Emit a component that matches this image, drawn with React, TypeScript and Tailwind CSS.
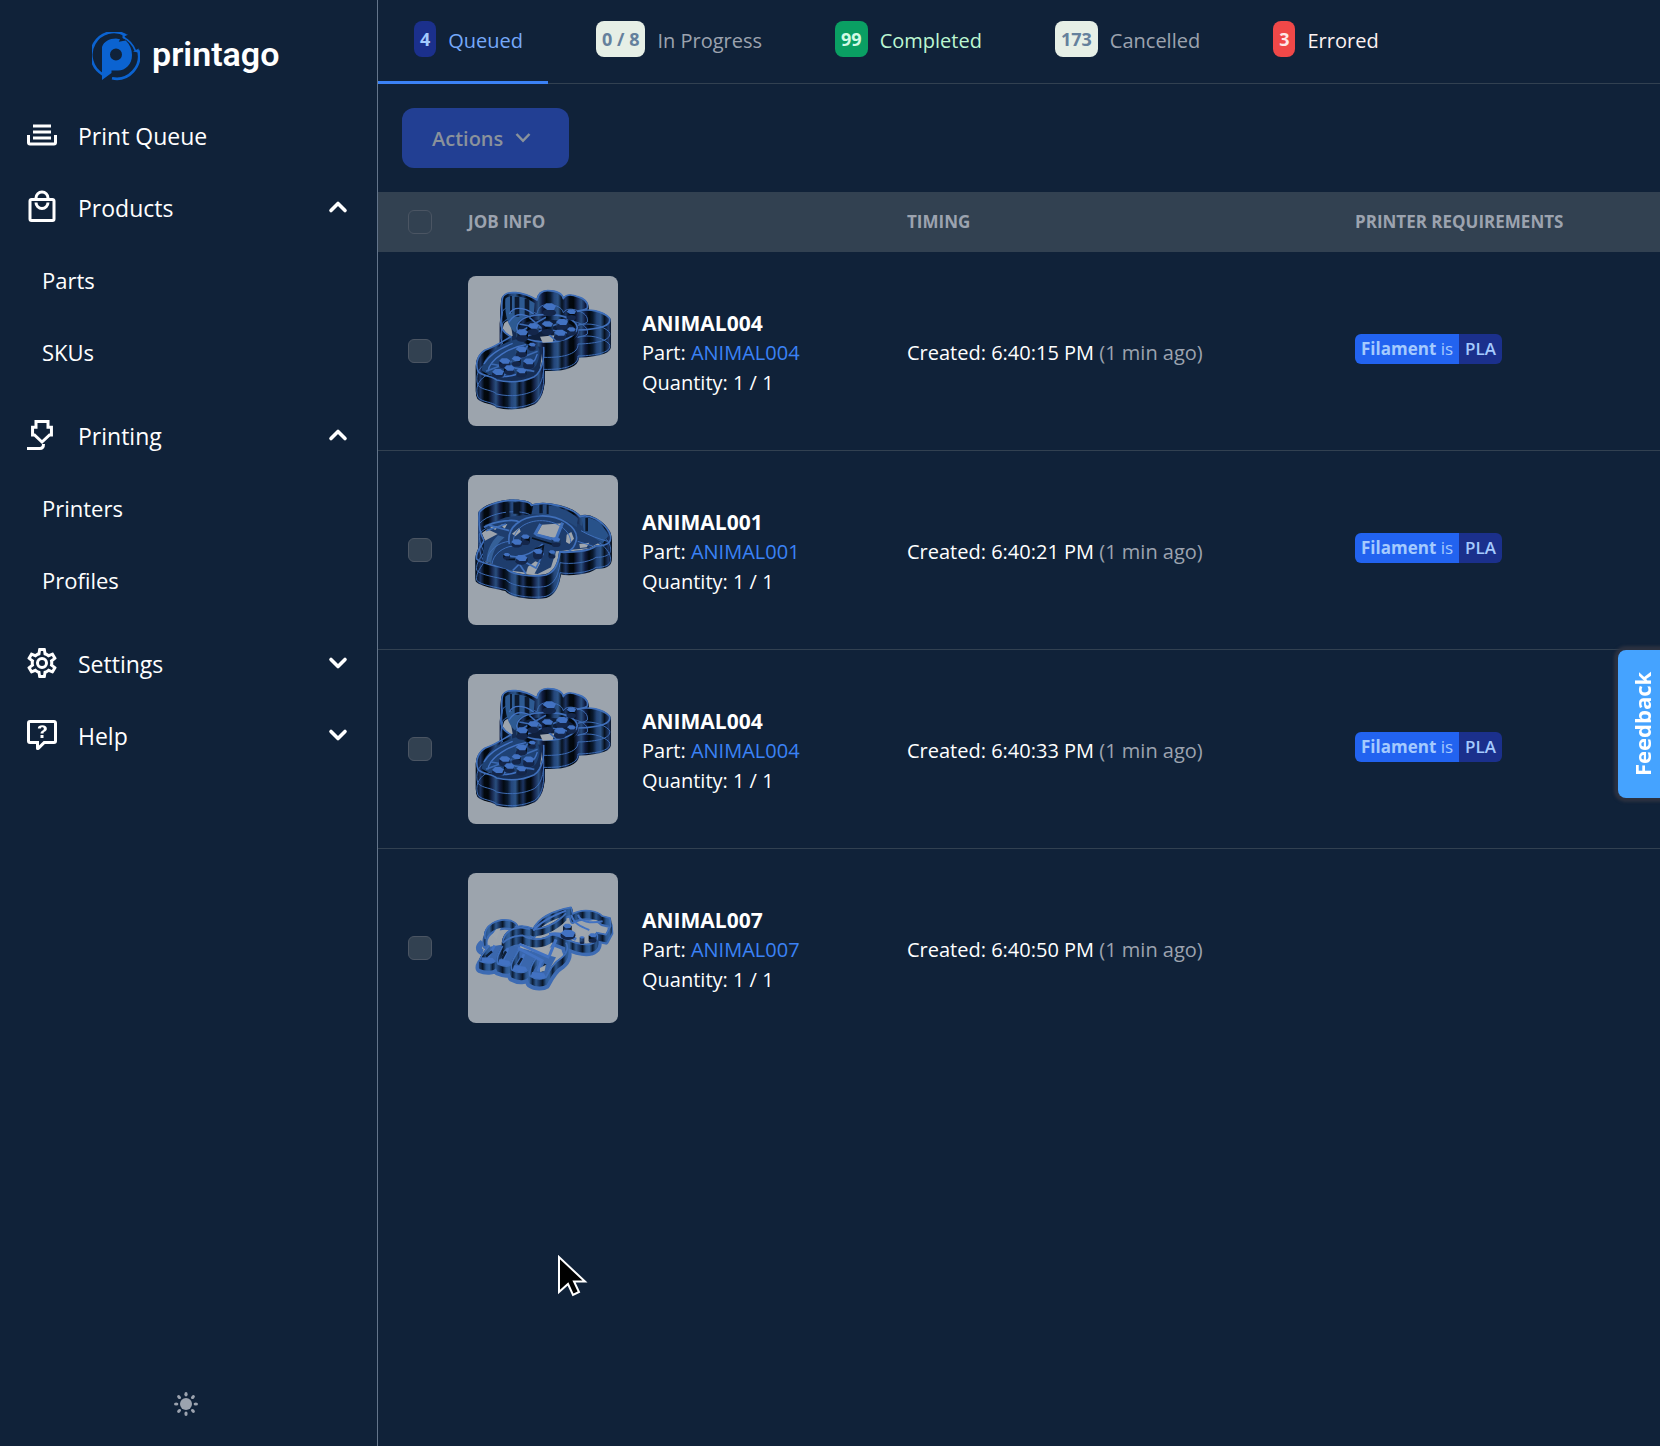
import { useState } from "react";
import type { ReactNode } from "react";

import clsx from "clsx";

type ThumbKind = "giraffe" | "bear" | "unicorn";

interface Job {
  id: number;
  sku: string;
  created: string;
  ago: string;
  filament: string | null;
  thumb: ThumbKind;
}

const JOBS: Job[] = [
  { id: 1, sku: "ANIMAL004", created: "6:40:15 PM", ago: "1 min ago", filament: "PLA", thumb: "giraffe" },
  { id: 2, sku: "ANIMAL001", created: "6:40:21 PM", ago: "1 min ago", filament: "PLA", thumb: "bear" },
  { id: 3, sku: "ANIMAL004", created: "6:40:33 PM", ago: "1 min ago", filament: "PLA", thumb: "giraffe" },
  { id: 4, sku: "ANIMAL007", created: "6:40:50 PM", ago: "1 min ago", filament: null, thumb: "unicorn" },
];

const TABS = [
  { label: "Queued", count: "4", badge: "bg-[#1b308c] text-[#a4cafe]", text: "text-[#76a9fa]" },
  { label: "In Progress", count: "0 / 8", badge: "bg-[#e6efe6] text-[#64809c]", text: "text-[#9ca3af]" },
  { label: "Completed", count: "99", badge: "bg-[#0a9f63] text-[#d1fae5]", text: "text-[#bcf7d2]" },
  { label: "Cancelled", count: "173", badge: "bg-[#e6efe6] text-[#64809c]", text: "text-[#9ca3af]" },
  { label: "Errored", count: "3", badge: "bg-[#f04848] text-[#fde8e8]", text: "text-[#fdf2f2]" },
];

const ICONS = {
  queue:
    "M18 5H6V7H18V5M6 9H18V11H6V9M2 12H4V17H20V12H22V17A2 2 0 0 1 20 19H4A2 2 0 0 1 2 17V12M18 13H6V15H18V13Z",
  products:
    "M19,20H5V8H19M12,3A3,3 0 0,1 15,6H9A3,3 0 0,1 12,3M19,6H17A5,5 0 0,0 12,1A5,5 0 0,0 7,6H5C3.89,6 3,6.89 3,8V20A2,2 0 0,0 5,22H19A2,2 0 0,0 21,20V8C21,6.89 20.1,6 19,6M12,12A3,3 0 0,1 9,9H7A5,5 0 0,0 12,14A5,5 0 0,0 17,9H15A3,3 0 0,1 12,12Z",
  settings:
    "M12,8A4,4 0 0,1 16,12A4,4 0 0,1 12,16A4,4 0 0,1 8,12A4,4 0 0,1 12,8M12,10A2,2 0 0,0 10,12A2,2 0 0,0 12,14A2,2 0 0,0 14,12A2,2 0 0,0 12,10M10,22C9.75,22 9.54,21.82 9.5,21.58L9.13,18.93C8.5,18.68 7.96,18.34 7.44,17.94L4.95,18.95C4.73,19.03 4.46,18.95 4.34,18.73L2.34,15.27C2.21,15.05 2.27,14.78 2.46,14.63L4.57,12.97L4.5,12L4.57,11L2.46,9.37C2.27,9.22 2.21,8.95 2.34,8.73L4.34,5.27C4.46,5.05 4.73,4.96 4.95,5.05L7.44,6.05C7.96,5.66 8.5,5.32 9.13,5.07L9.5,2.42C9.54,2.18 9.75,2 10,2H14C14.25,2 14.46,2.18 14.5,2.42L14.87,5.07C15.5,5.32 16.04,5.66 16.56,6.05L19.05,5.05C19.27,4.96 19.54,5.05 19.66,5.27L21.66,8.73C21.79,8.95 21.73,9.22 21.54,9.37L19.43,11L19.5,12L19.43,13L21.54,14.63C21.73,14.78 21.79,15.05 21.66,15.27L19.66,18.73C19.54,18.95 19.27,19.04 19.05,18.95L16.56,17.95C16.04,18.34 15.5,18.68 14.87,18.93L14.5,21.58C14.46,21.82 14.25,22 14,22H10M11.25,4L10.88,6.61C9.68,6.86 8.62,7.5 7.85,8.39L5.44,7.35L4.69,8.65L6.8,10.2C6.4,11.37 6.4,12.64 6.8,13.8L4.68,15.36L5.43,16.66L7.86,15.62C8.63,16.5 9.68,17.14 10.87,17.38L11.24,20H12.76L13.13,17.39C14.32,17.14 15.37,16.5 16.14,15.62L18.57,16.66L19.32,15.36L17.2,13.81C17.6,12.64 17.6,11.37 17.2,10.2L19.31,8.65L18.56,7.35L16.15,8.39C15.38,7.5 14.32,6.86 13.12,6.62L12.75,4H11.25Z",
  help:
    "M4,2A2,2 0 0,0 2,4V16A2,2 0 0,0 4,18H8V21A1,1 0 0,0 9,22H9.5C9.75,22 10,21.9 10.2,21.71L13.9,18H20A2,2 0 0,0 22,16V4C22,2.89 21.1,2 20,2H4M4,4H20V16H13.08L10,19.08V16H4V4M12.19,5.5C11.3,5.5 10.59,5.68 10.05,6.04C9.5,6.4 9.22,7 9.27,7.69H11.24C11.24,7.41 11.34,7.2 11.5,7.06C11.7,6.92 11.92,6.85 12.19,6.85C12.5,6.85 12.77,6.93 12.95,7.11C13.13,7.28 13.22,7.5 13.22,7.8C13.22,8.08 13.14,8.33 13,8.54C12.83,8.76 12.62,8.94 12.36,9.08C11.84,9.4 11.5,9.68 11.29,9.92C11.1,10.16 11,10.5 11,11H13C13,10.72 13.05,10.5 13.14,10.32C13.23,10.15 13.4,10 13.66,9.85C14.12,9.64 14.5,9.36 14.79,9C15.08,8.63 15.23,8.24 15.23,7.8C15.23,7.1 14.96,6.54 14.42,6.12C13.88,5.71 13.13,5.5 12.19,5.5M11,12V14H13V12H11Z",
};

function NavIcon({ path }: { path: string }) {
  return (
    <svg viewBox="0 0 24 24" className="mb-0.5 size-9 shrink-0" fill="currentColor" fillRule="evenodd" aria-hidden="true">
      <path d={path} />
    </svg>
  );
}

function NozzleIcon() {
  return (
    <svg viewBox="0 0 24 24" className="mb-0.5 size-9 shrink-0" fill="none" stroke="currentColor" strokeWidth="2" aria-hidden="true">
      <path d="M8 3h8v3.800h2.300V12H17l-5 4.700L7 12H5.700V6.800H8z" />
      <path d="M13 18c0 2-.7 3-2.500 3H2" />
    </svg>
  );
}

function Chevron({ open }: { open?: boolean }) {
  return (
    <svg viewBox="0 0 24 24" className="mb-0.5 size-6" fill="none" stroke="currentColor" strokeWidth="3.600" strokeLinecap="round" strokeLinejoin="round" aria-hidden="true">
      <path d={open ? "M5 15.500 12 8.500l7 7" : "M5 8.500 12 15.500l7-7"} />
    </svg>
  );
}

function Logo() {
  return (
    <a href="#home" className="flex items-center gap-3 pl-23 pt-8">
      <svg viewBox="0 0 48 49" className="h-[49px] w-12 shrink-0" aria-hidden="true">
        <g fill="none" stroke="#0b63d1" strokeWidth="2.600">
          <path d="M10.500 42.300A22.600 22.600 0 0 1 33.500 3.200" />
          <path d="M46.200 18A22.600 22.600 0 0 1 20 46.300" />
          <path d="M31.500 5.500c5.500 2.500 9.500 7 12 13.500" strokeWidth="1.800" />
        </g>
        <path
          d="M10 48V15C12 9.500 17 6.500 24 6.500l4 .8-1.200 2.500 7-1.300C38 12.500 40 17.500 40 23c0 9.500-6.500 15.500-14 15.500h-6.500V41zM24 16.500a6 6 0 1 0 0 12 6 6 0 0 0 0-12z"
          fill="#0b63d1"
          fillRule="evenodd"
        />
        <path d="M30.500 1.200l5.500 1.500-3.500 1.500 2 3.300-4-1.500zM41 19.500l5.800-3-.6 4z" fill="#0b63d1" />
      </svg>
      <span className="pb-1.5 font-[Roboto,sans-serif] text-[34px] leading-10 font-semibold text-white">printago</span>
    </a>
  );
}

function NavGroup({ icon, label, items }: { icon: ReactNode; label: string; items?: string[] }) {
  const [open, setOpen] = useState(Boolean(items));
  return (
    <li>
      <button
        type="button"
        aria-expanded={open}
        onClick={() => setOpen((o) => !o)}
        className="flex h-18 w-full items-center gap-4.5 pr-[27px] pl-6 text-left"
      >
        {icon}
        <span className="flex-1">{label}</span>
        <Chevron open={open} />
      </button>
      {open && items && (
        <ul className="pb-3 text-[22px]">
          {items.map((item) => (
            <li key={item}>
              <a href={`#${item.toLowerCase()}`} className="flex h-18 items-center pl-[42px]">
                {item}
              </a>
            </li>
          ))}
        </ul>
      )}
    </li>
  );
}

function Sidebar() {
  return (
    <aside className="flex w-[378px] shrink-0 flex-col border-r border-[#64758b]">
      <Logo />
      <nav className="mt-[19px] flex-1 text-[23px] leading-9 text-white">
        <ul>
          <li>
            <a href="#queue" className="flex h-18 items-center gap-4.5 pl-6">
              <NavIcon path={ICONS.queue} />
              Print Queue
            </a>
          </li>
          <NavGroup icon={<NavIcon path={ICONS.products} />} label="Products" items={["Parts", "SKUs"]} />
          <NavGroup icon={<NozzleIcon />} label="Printing" items={["Printers", "Profiles"]} />
          <NavGroup icon={<NavIcon path={ICONS.settings} />} label="Settings" />
          <NavGroup icon={<NavIcon path={ICONS.help} />} label="Help" />
        </ul>
      </nav>
      <div className="flex justify-center pr-1.5 pb-[30px]">
        <button type="button" aria-label="Toggle theme" className="text-[#9ca3af]">
          <svg viewBox="0 0 24 24" className="size-6" fill="currentColor" aria-hidden="true">
            <circle cx="12" cy="12" r="6" />
            {[0, 45, 90, 135, 180, 225, 270, 315].map((a) => (
              <ellipse key={a} cx="12" cy="2.200" rx="1.600" ry="2.200" transform={`rotate(${a} 12 12)`} />
            ))}
          </svg>
        </button>
      </div>
    </aside>
  );
}

const range = (from: number, to: number, step: number) => {
  const out: number[] = [];
  for (let v = from; v >= to; v -= step) out.push(v);
  return out;
};

// Sweeps an outline downwards so it reads as a printed wall, then draws the rim on top
function Wall({ d, height, rims, light }: { d: string; height: number; rims?: number[]; light?: boolean }) {
  return (
    <g fill="none" strokeLinejoin="round">
      {range(height, 0, 3).map((y) => (
        <path key={y} d={d} transform={`translate(0 ${y})`} stroke={light ? "url(#wall-light)" : "url(#wall)"} strokeWidth="6" />
      ))}
      {(rims ?? []).map((y) => (
        <path key={y} d={d} transform={`translate(0 ${y})`} stroke="#3d6cb4" strokeWidth="3" />
      ))}
      <path d={d} stroke="#3f6fba" strokeWidth="5" />
    </g>
  );
}

function Post({ x, y, r = 15, h = 18 }: { x: number; y: number; r?: number; h?: number }) {
  return (
    <g>
      <rect x={x - r} y={y} width={r * 2} height={h} fill="url(#wall)" />
      <ellipse cx={x} cy={y + h} rx={r} ry={r * 0.55} fill="#14264a" />
      <path
        d={`M${x - r} ${y}l${r * 0.5} ${-r * 0.5}h${r * 0.9}l${r * 0.6} ${r * 0.4}l${-r * 0.3} ${r * 0.6}h${-r}z`}
        fill="#4272c2"
      />
    </g>
  );
}

function ThumbDefs() {
  const stops = ["#2c5488", "#08121f", "#1c3564", "#03090f", "#02070c", "#17284f", "#2a4f80", "#101c40", "#030a12", "#0a1a30", "#24467a", "#2c5488"];
  const soft = ["#34639f", "#0d1e36", "#2d5890", "#1a3763", "#0a1626", "#2b568f", "#34639f"];
  return (
    <svg className="absolute size-0" aria-hidden="true">
      <defs>
        <linearGradient id="wall" gradientUnits="userSpaceOnUse" x1="50" x2="178" y1="0" y2="0" spreadMethod="repeat">
          {stops.map((c, i) => <stop key={i} offset={i / (stops.length - 1)} stopColor={c} />)}
        </linearGradient>
        <linearGradient id="wall-light" gradientUnits="userSpaceOnUse" x1="40" x2="100" y1="0" y2="0" spreadMethod="repeat">
          {soft.map((c, i) => <stop key={i} offset={i / (soft.length - 1)} stopColor={c} />)}
        </linearGradient>
      </defs>
    </svg>
  );
}

function Giraffe() {
  const outline =
    "M140 100C150 78 200 82 243 108C246 88 256 80 275 80C300 80 318 88 322 104C330 90 350 92 365 98C385 104 397 115 394 132C385 140 372 138 365 142C400 132 440 142 460 162C468 182 440 196 366 198C368 225 330 240 262 238C266 275 262 320 235 338C205 352 165 358 122 348C110 335 80 338 66 322C56 295 68 270 88 258C110 252 140 232 165 218C140 205 130 190 136 160C140 140 134 120 140 100Z";
  return (
    <svg viewBox="36 36 450 450" className="size-full">
      <path d="M150 100L240 110L320 100L380 125L372 200L262 240L240 400L120 405L75 370L100 260L170 215Z" fill="#162d54" />
      <Wall d={outline} height={80} rims={[78, 42]} />
      <path d="M148 104C160 90 205 95 236 118L232 165L176 205C150 180 146 140 148 104Z" fill="#2d5a92" />
      <path d="M176 98h14v60h-14zM162 96h6v50h-6zM206 104h14v50h-14z" fill="#0d1a30" />
      <path d="M160 150C175 120 220 135 240 158M158 175C180 140 215 150 228 168" fill="none" stroke="#4272c2" strokeWidth="4" />
      <path d="M78 320C74 275 150 225 205 222C250 230 262 262 240 305C210 340 120 350 78 320Z" fill="#1f4275" />
      <path d="M96 322C100 285 165 248 210 242M118 336C170 345 230 320 244 270M84 300C100 270 140 250 170 238" fill="none" stroke="#4272c2" strokeWidth="4" />
      <ellipse cx="272" cy="192" rx="90" ry="42" fill="#0f1f3c" />
      <Wall d="M182 192C185 160 230 150 275 152C320 152 360 165 364 190C360 220 320 234 272 234C225 234 184 220 182 192Z" height={12} />
      <path d="M252 218l44-4-6 20-30 2z" fill="#9fa6ae" />
      <path d="M190 180L350 210M205 220L340 165M220 160L300 230M190 205L270 160" stroke="#3b6ab3" strokeWidth="5" />
      <Post x={280} y={128} r={20} />
      <Post x={346} y={143} r={14} />
      <Post x={231} y={186} r={17} />
      <Post x={274} y={180} r={17} h={24} />
      <Post x={318} y={174} r={18} h={14} />
      <Post x={198} y={205} r={18} />
      <Post x={312} y={206} r={18} h={14} />
      <Post x={346} y={196} r={13} h={12} />
      <path d="M90 322L245 262M105 300L235 322M140 340L215 245" stroke="#3b6ab3" strokeWidth="5" />
      <Post x={196} y={256} r={17} h={16} />
      <Post x={228} y={242} r={11} h={12} />
      <Post x={146} y={291} r={17} h={14} />
      <Post x={181} y={284} r={14} h={16} />
      <Post x={218} y={292} r={17} h={14} />
      <Post x={126} y={324} r={18} h={8} />
      <Post x={160} y={312} r={16} h={12} />
      <Post x={196} y={320} r={15} h={12} />
    </svg>
  );
}

function Bear() {
  const outline =
    "M70 145C90 120 150 105 190 110C210 112 225 117 226 124C270 110 350 130 372 158C400 148 440 170 460 205C470 230 462 246 420 246C400 262 340 268 312 262C308 300 295 325 270 333C230 340 165 333 150 313C120 305 75 300 62 285C58 262 80 240 84 230C74 210 66 190 70 145Z";
  return (
    <svg viewBox="36 33 450 450" className="size-full">
      <Wall d={outline} height={66} rims={[64, 34]} />
      <path d="M88 182L150 160L230 150L330 160L385 190L440 230L400 252L300 262L285 310L245 330L165 320L80 290L84 232L125 210L82 190Z" fill="#1e3d6d" />
      <path d="M232 124C280 116 345 138 366 164L362 190C330 165 280 150 226 152Z" fill="#24487c" />
      <path d="M376 160C410 152 445 185 458 215L440 238C420 225 400 212 384 204Z" fill="#28528a" />
      <path d="M92 292C92 262 104 235 126 214L146 220C120 240 108 270 106 298Z" fill="#356098" />
      <path d="M150 118h10v40h-10zM172 115h18v34h-18zM250 122h10v26h-10zM272 122h6v28h-6zM388 162h8v40h-8z" fill="#0a1628" />
      {/* openings in the floor */}
      <g fill="#9fa6ae">
        <path d="M258 182l62-4-18 46-60-14z" />
        <path d="M332 212l14-8 8 20-14 16-10-6z" />
        <path d="M102 190l24-4-8 12zM134 182l20-2-8 14z" />
        <path d="M168 209l22-18 4 12-16 14z" />
        <path d="M370 240l30-4-8 14-20 2z" />
        <path d="M216 308l22-16 14 6-18 34-24-4z" />
      </g>
      <g fill="none" stroke="#3f6fba" strokeWidth="5">
        <path d="M160 240C150 190 195 158 250 156C310 152 372 190 360 232C352 262 330 268 312 264" />
        <path d="M172 246C166 200 205 172 250 170C300 168 346 200 344 236" strokeWidth="3" />
        <path d="M240 212L300 228M320 176L300 226M254 180L236 212" strokeWidth="9" />
        <path d="M92 296C95 255 130 235 160 232M108 300C112 270 140 250 170 246" strokeWidth="3" />
        <path d="M84 190C120 168 180 165 190 175M90 200L150 180M100 184L160 200" />
        <path d="M375 200C400 215 430 225 455 232M365 232L410 246" strokeWidth="3" />
        <path d="M150 270C180 290 230 270 260 240M190 300L210 330M170 320L200 290L240 312L262 268" />
      </g>
      <path d="M228 222L300 244M236 256L262 246L258 272M150 286h40" stroke="#08121f" strokeWidth="5" fill="none" />
      <Post x={208} y={218} r={13} h={18} />
      <Post x={300} y={226} r={13} h={16} />
      <Post x={182} y={234} r={16} h={8} />
      <Post x={152} y={272} r={10} h={10} />
      <Post x={196} y={282} r={18} h={10} />
      <Post x={246} y={262} r={14} h={16} />
      <Post x={288} y={264} r={10} h={14} />
    </svg>
  );
}

function Unicorn() {
  const outline =
    "M88 225C78 185 125 160 165 170C180 176 188 184 178 190C200 182 222 190 232 194C250 160 290 140 345 130L350 150C380 132 425 140 438 156L462 162L464 186L450 212L420 206";
  const belly = "M420 206C428 220 424 234 405 240C370 248 325 222 288 210C262 232 220 228 200 214C175 216 150 225 140 238";
  const legs =
    "M100 244C88 262 68 280 72 292C90 300 112 298 118 290M140 246C130 265 118 285 126 300C145 308 160 308 164 300M188 258C176 280 160 300 168 318C190 330 210 326 214 318M240 282C228 300 218 322 222 336C240 348 262 346 270 340C280 320 292 296 316 282C334 268 338 250 330 236";
  return (
    <svg viewBox="36 27 450 450" className="size-full">
      <g fill="none" stroke="#3d6bb3" strokeWidth="26" strokeLinejoin="round" strokeLinecap="round" transform="translate(0 22)">
        <path d={outline} strokeWidth="16" />
        <path d={belly} />
        <path d={legs} />
      </g>
      <path d="M92 250L150 240L260 270L300 280L262 350L215 330L165 310L75 290Z" fill="#3a67ad" />
      <path d="M80 245C64 240 66 225 80 215" fill="none" stroke="#3d6bb3" strokeWidth="18" transform="translate(0 20)" />
      <g fill="#9fa6ae">
        <path d="M196 228L296 226L268 274L192 250Z" />
        <path d="M248 196C270 176 300 160 316 158L300 182L262 200Z" />
        <path d="M108 214l16-24 10 2-12 34z" />
        <path d="M360 190l34 10-10 20-22-8z" />
        <path d="M396 172l28-8 8 10-24 8z" />
      </g>
      <Wall d={outline} height={20} light />
      <Wall d="M140 238C142 200 180 182 222 196M232 196C262 196 300 180 330 148" height={18} light />
      <Wall d={belly} height={22} light />
      <Wall d={legs} height={20} light />
      {/* hooves */}
      <g fill="#4272c2">
        <path d="M76 280l34 2 8 10-6 6-36-4z" />
        <path d="M130 286l30 4 4 10-10 6-28-6z" />
        <path d="M174 304l34 4 6 10-14 8-30-8z" />
        <path d="M228 324l36 4 6 12-14 6-32-8z" />
      </g>
      <g fill="none" stroke="#4272c2" strokeWidth="6">
        <path d="M190 240L280 280M186 252L262 292M300 226L280 276" strokeWidth="9" />
        <path d="M232 200C255 172 290 156 330 140M346 152C352 180 380 190 400 198M366 152C372 172 400 180 440 172" />
        <path d="M280 212C300 206 340 214 360 226" strokeWidth="10" />
        <path d="M116 244L96 280M156 252L142 286M204 270L190 304M256 290L246 322" strokeWidth="8" />
      </g>
      <path d="M108 262L90 278M150 262L138 284M198 282L186 302M268 300L258 322" stroke="#0d1e36" strokeWidth="7" />
      <path d="M252 312l18-10-4 18-14 4z" fill="#9fa6ae" />
      <Post x={334} y={186} r={13} h={18} />
      <Post x={336} y={208} r={22} h={8} />
      <Post x={410} y={214} r={12} h={16} />
      <Post x={378} y={220} r={7} h={16} />
    </svg>
  );
}

const THUMBS: Record<ThumbKind, () => ReactNode> = { giraffe: Giraffe, bear: Bear, unicorn: Unicorn };

function CheckBox({ label }: { label: string }) {
  return (
    <input
      type="checkbox"
      aria-label={label}
      className="block size-6 appearance-none rounded-md border border-[#4b5563] bg-[#324151] checked:bg-[#3b82f6]"
    />
  );
}

function JobRow({ job }: { job: Job }) {
  const Thumb = THUMBS[job.thumb];
  return (
    <tr className="border-b border-[#324151] last:border-b-0">
      <td className="py-6 pl-[30px]">
        <CheckBox label={`Select ${job.sku}`} />
      </td>
      <td className="py-6">
        <div className="flex items-center gap-6">
          <div className="size-[150px] shrink-0 overflow-hidden rounded-lg bg-[#9ca4ad]">
            <Thumb />
          </div>
          <div className="pt-1">
            <p className="text-[21px] font-bold">{job.sku}</p>
            <p>
              Part: <a href={`#${job.sku}`} className="text-[#3b82f6]">{job.sku}</a>
            </p>
            <p>Quantity: 1 / 1</p>
          </div>
        </div>
      </td>
      <td className="pt-7 pb-6">
        Created: {job.created} <span className="text-[#9ca3af]">({job.ago})</span>
      </td>
      <td className="py-6">
        {job.filament && (
          <div className="mb-1 flex text-[17px] text-[#a4cafe]">
            <span className="rounded-l-md bg-[#2263f0] px-1.5">
              <b className="font-bold">Filament</b> is
            </span>
            <span className="rounded-r-md bg-[#1b308c] px-1.5 font-semibold">{job.filament}</span>
          </div>
        )}
      </td>
    </tr>
  );
}

export default function App() {
  const [active, setActive] = useState("Queued");

  return (
    <div className="flex min-h-screen overflow-hidden bg-[#102239] font-['Open_Sans','Noto_Sans',sans-serif]">
      <ThumbDefs />
      <Sidebar />

      <main className="min-w-0 flex-1">
        {/* Status tabs */}
        <div role="tablist" className="flex h-21 gap-3 border-b border-[#324151]">
          {TABS.map((tab) => (
            <button
              key={tab.label}
              type="button"
              role="tab"
              aria-selected={active === tab.label}
              onClick={() => setActive(tab.label)}
              className={clsx(
                "-mb-px flex items-center gap-3 border-b-3 pr-[25px] pl-9 text-[20px] leading-[30px] font-medium",
                active === tab.label ? "border-[#3b82f6]" : "border-transparent",
                tab.text,
              )}
            >
              <span className={clsx("mb-1 rounded-lg px-1.5 text-[18px] leading-9 font-bold", tab.badge)}>{tab.count}</span>
              {tab.label}
            </button>
          ))}
        </div>

        <div className="p-6">
          <button
            type="button"
            disabled
            className="flex h-15 items-center gap-3 rounded-xl bg-[#223f93] pt-0.5 pr-[38px] pl-[30px] text-[20px] font-semibold text-[#8a929b]"
          >
            Actions
            <svg viewBox="0 0 16 16" className="mb-0.5 size-4" fill="none" stroke="currentColor" strokeWidth="2.500" aria-hidden="true">
              <path d="M1.500 4 8 10.800 14.500 4" />
            </svg>
          </button>
        </div>

        {/* Job table */}
        <table className="w-full table-fixed text-left text-[20px] leading-[30px] text-white">
          <colgroup>
            <col className="w-[90px]" />
            <col className="w-[439px]" />
            <col className="w-[448px]" />
            <col />
          </colgroup>
          <thead className="bg-[#324151] text-[17px] text-[#9ca3af] uppercase">
            <tr className="h-15">
              <th className="pl-[30px]">
                <CheckBox label="Select all jobs" />
              </th>
              <th className="font-bold">Job Info</th>
              <th className="font-bold">Timing</th>
              <th className="font-bold">Printer Requirements</th>
            </tr>
          </thead>
          <tbody>
            {JOBS.map((job) => (
              <JobRow key={job.id} job={job} />
            ))}
          </tbody>
        </table>
      </main>

      {/* Feedback handle */}
      <button
        type="button"
        className="fixed top-[650px] right-0 flex h-[148px] w-[42px] rotate-180 items-center justify-center rounded-r-lg bg-[#45a3ff] pr-2 text-[22px] font-bold text-white shadow-[0_0_3px_4px_#2b3140] [writing-mode:vertical-rl]"
      >
        Feedback
      </button>

      {/* Pointer */}
      <svg viewBox="0 0 32 46" className="pointer-events-none fixed top-[1253px] left-[556px] h-[46px] w-8" aria-hidden="true">
        <path d="M3 4v35l9-8 5 11 6-3-5-10.500h11z" fill="#000" stroke="#fff" strokeWidth="2" />
      </svg>
    </div>
  );
}
